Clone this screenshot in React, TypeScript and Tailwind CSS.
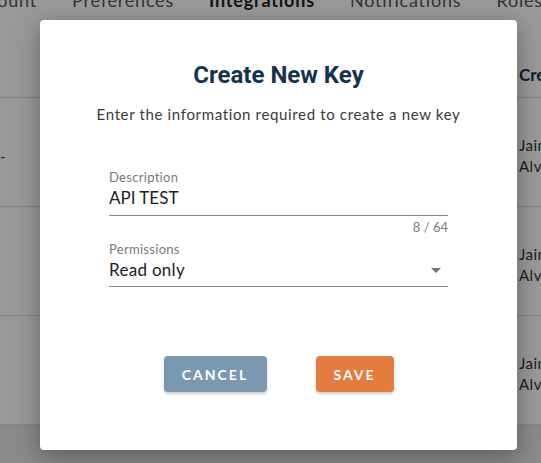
const body = { fontFamily: 'Lato, "Open Sans", sans-serif' };

const tabs = [
  { label: 'Preferences', active: false },
  { label: 'Integrations', active: true },
  { label: 'Notifications', active: false },
  { label: 'Roles', active: false },
];

function Row({ dash }: { dash?: boolean }) {
  return (
    <div className="flex h-[109px] border-b border-[#dcdcdc]">
      <div className="w-[519px] shrink-0 pt-[48px] text-[15px] leading-[21px] text-[#333]">{dash ? '-' : ''}</div>
      <div className="pt-[37px] text-[15px] leading-[21px] tracking-[0.5px] text-[#333] whitespace-nowrap">
        <div>Jaime</div>
        <div>Alvarez</div>
      </div>
    </div>
  );
}

export default function App() {
  return (
    <div className="relative w-[541px] h-[463px] overflow-hidden bg-white" style={body}>
      {/* page behind the dialog */}
      <div className="-mt-[11px] flex gap-[35px] text-[18px] leading-[22px] tracking-[0.8px] text-[#555] whitespace-nowrap">
        <div className="w-[37px] shrink-0 flex justify-end">
          <span>Account</span>
        </div>
        {tabs.map((t) => (
          <span key={t.label} className={t.active ? 'font-bold text-[#222]' : ''}>
            {t.label}
          </span>
        ))}
      </div>
      <div className="flex h-[87px] border-b border-[#dcdcdc]">
        <div className="w-[519px] shrink-0" />
        <div className="pt-[54px] text-[17px] leading-5 font-bold text-[#17324f] whitespace-nowrap">Created by</div>
      </div>
      <Row dash />
      <Row />
      <Row />
      <div className="h-[40px] bg-[#e6e6e6]" />

      {/* overlay */}
      <div className="absolute inset-0 bg-black/40">
        <div className="absolute left-[40px] top-[20px] w-[477px] h-[430px] bg-white rounded-[4px] shadow-[0_6px_24px_rgba(0,0,0,0.35)] flex flex-col items-center pt-[40px]">
          <h2
            className="text-[24px] leading-[30px] font-bold text-[#17324f]"
            style={{ fontFamily: 'Roboto, sans-serif' }}
          >
            Create New Key
          </h2>
          <p className="mt-[14px] text-[15px] leading-5 tracking-[0.65px] text-[#3a3a3a] whitespace-nowrap">
            Enter the information required to create a new key
          </p>

          <div className="w-[339px] mt-[45px]">
            <div className="text-[13px] leading-4 tracking-[0.3px] text-[#7a7a7a]">Description</div>
            <div className="mt-[1px] pb-[5px] border-b border-[#8a8a8a] text-[17px] leading-6 text-[#222]">API TEST</div>
            <div className="mt-[3px] text-right text-[13px] leading-4 text-[#7a7a7a]">8 / 64</div>

            <div className="mt-[6px] text-[13px] leading-4 tracking-[0.3px] text-[#7a7a7a]">Permissions</div>
            <div className="mt-[1px] pb-[4px] border-b border-[#8a8a8a] flex items-center justify-between text-[17px] leading-6 tracking-[0.3px] text-[#222]">
              <span>Read only</span>
              <svg width="10" height="5" viewBox="0 0 10 5" className="mr-[7px]">
                <path d="M0 0h10L5 5z" fill="#777" />
              </svg>
            </div>
          </div>

          <div className="mt-[69px] flex justify-center gap-[49px]">
            <button className="w-[103px] h-[36px] rounded-[4px] bg-[#7c98b0] text-white text-[14px] font-bold tracking-[2px] shadow-[0_2px_3px_rgba(0,0,0,0.2)]">
              CANCEL
            </button>
            <button className="w-[78px] h-[36px] rounded-[4px] bg-[#e47b3f] text-white text-[14px] font-bold tracking-[2px] shadow-[0_2px_3px_rgba(0,0,0,0.2)]">
              SAVE
            </button>
          </div>
        </div>
      </div>
    </div>
  );
}
